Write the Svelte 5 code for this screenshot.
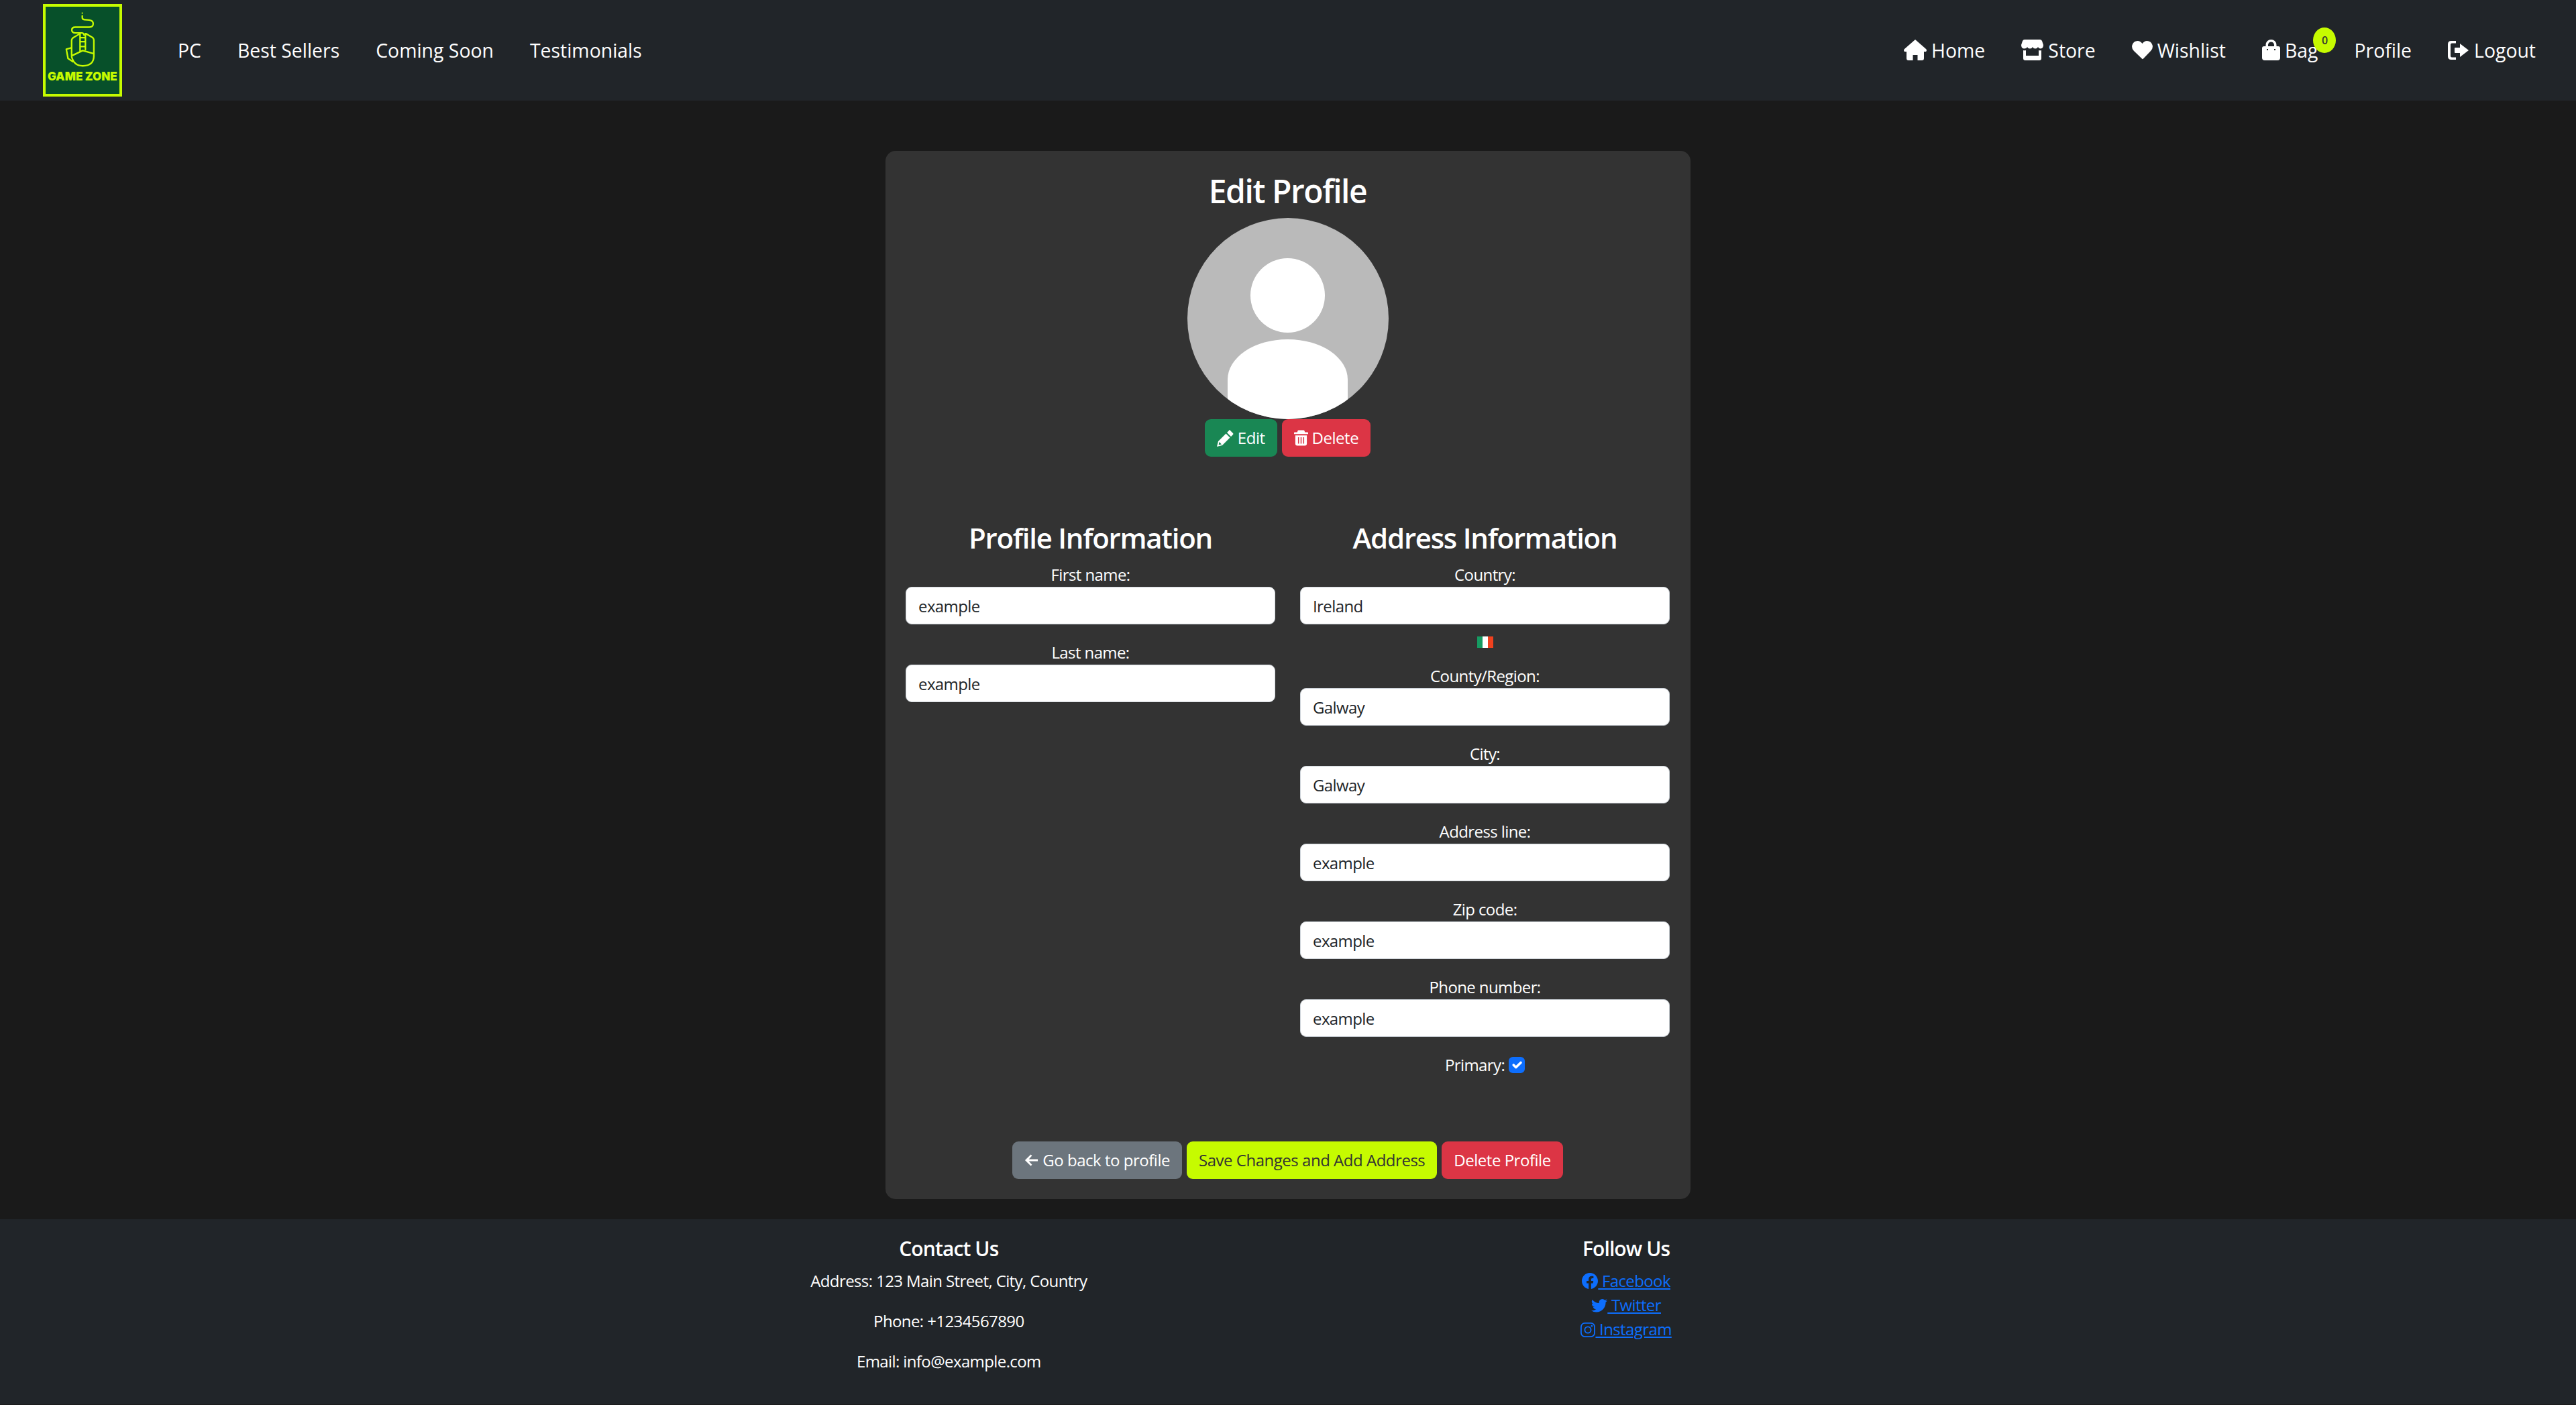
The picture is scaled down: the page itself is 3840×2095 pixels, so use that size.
<script>
  const leftLinks = ['PC', 'Best Sellers', 'Coming Soon', 'Testimonials'];
  const profileFields = [
    { label: 'First name:', value: 'example' },
    { label: 'Last name:', value: 'example' }
  ];
  const addressFields = [
    { label: 'County/Region:', value: 'Galway' },
    { label: 'City:', value: 'Galway' },
    { label: 'Address line:', value: 'example' },
    { label: 'Zip code:', value: 'example' },
    { label: 'Phone number:', value: 'example' }
  ];
</script>

<nav class="navbar">
  <div class="nav-left">
    <div class="logo">
      <svg viewBox="84 29 330 392" width="110" height="130">
        <g fill="none" stroke="#c6fb00" stroke-width="7" stroke-linecap="round" stroke-linejoin="round">
          <path d="M248 70v8q0 8 9 9l22 2q18 2 18 17 0 15-18 15h-62q-16 0-16 13 0 13 16 13l28 0q10 0 11 10" />
          <path d="M238 150 208 168q-8 5-8 14v66" />
          <path d="M264 150 292 166q8 5 8 14v70q0 45-50 45-40 0-50-42" />
          <path d="M198 214 176 220 184 262 206 276" />
          <path d="M238 150v78M262 150v72M238 168h24M238 186h24M238 208h24" />
          <path d="M204 248 250 226 298 240" />
        </g>
        <circle cx="248" cy="58" r="3.500" fill="#c6fb00" />
        <text x="92" y="360" textLength="313" lengthAdjust="spacingAndGlyphs" class="logo-text">GAME ZONE</text>
      </svg>
    </div>
    <ul class="links first">
      {#each leftLinks as link}
        <li>{link}</li>
      {/each}
    </ul>
  </div>
  <ul class="links">
    <li>
      <svg class="ico" viewBox="0 0 34 31" width="34" height="31"><path fill="#fff" d="M17 0 33 14q2 2 0 4h-3v10q0 3-3 3h-6.500V23h-7v8H7q-3 0-3-3V18H1q-2-2 0-4z" /></svg>
      Home
    </li>
    <li>
      <svg class="ico" viewBox="0 0 33 31" width="33" height="31"><path fill="#fff" d="M5 0h23q2 0 3 2l2 6q0 5-4 5.500-3 0-4-2.500-1 2.500-4 2.500-3 0-4-2.500-1 2.500-4 2.500-3 0-4-2.500-1 2.500-5 2.500-4-.5-4-5.500l2-6q1-2 3-2zM3 16q2 .5 4 0v8h19v-8q2 .5 4 0v12q0 3-3 3H6q-3 0-3-3z" /></svg>
      Store
    </li>
    <li>
      <svg class="ico" viewBox="0 0 31 31" width="31" height="31"><path fill="#fff" d="M15.500 29 3 17Q-1 13 .5 8 2.500 2 8.500 2q4 0 7 4 3-4 7-4 6 0 8 6 1.500 5-2.500 9L17 28.500q-1.500 1-1.500.5z" /></svg>
      Wishlist
    </li>
    <li class="bag">
      <svg class="ico" viewBox="0 0 27 31" width="27" height="31"><path fill="#fff" fill-rule="evenodd" d="M5.500 10V8a8 8 0 0 1 16 0v2H24q3 0 3 3v14q0 4-4 4H4q-4 0-4-4V13q0-3 3-3zM9 10h9V8a4.500 4.500 0 0 0-9 0zM7 14v2h2v-2zM18 14v2h2v-2z" /></svg>
      Bag
      <span class="badge">0</span>
    </li>
    <li>Profile</li>
    <li>
      <svg class="ico" viewBox="0 0 32 30" width="32" height="30"><path fill="#fff" d="M12 1v3.500H6q-2 0-2 2v17q0 2 2 2h6V29H5q-5 0-5-5V6q0-5 5-5zM18 5 31 15 18 25v-6h-7q-1 0-1-1v-6q0-1 1-1h7z" /></svg>
      Logout
    </li>
  </ul>
</nav>

<main class="page">
  <section class="card">
    <h2>Edit Profile</h2>
    <div class="avatar">
      <span class="head"></span>
      <span class="body"></span>
    </div>
    <div class="avatar-actions">
      <button class="btn green">
        <svg viewBox="0 0 25 25" width="25" height="25"><path fill="#fff" fill-rule="evenodd" d="M19 0l5 5q1 1 0 2l-3 3-6-6 3-3q.5-1 1-1zM13.500 5.500l6 6L8 23 0 25l2-8zM3.500 18 2.600 22.400 7 21.400z" /></svg>
        Edit
      </button>
      <button class="btn red">
        <svg viewBox="0 0 22 24" width="21" height="24"><path fill="#fff" fill-rule="evenodd" d="M7 0h8q1 0 1.500 1.500L17 3h4q1 0 1 1v2H0V4q0-1 1-1h4l.5-1.500Q6 0 7 0zM2 8h18v13q0 3-3 3H5q-3 0-3-3zm4.200 3v10h1.600V11zm4 0v10h1.600V11zm4 0v10h1.600V11z" /></svg>
        Delete
      </button>
    </div>

    <div class="columns">
      <div class="col">
        <h3>Profile Information</h3>
        {#each profileFields as field}
          <div class="field">
            <label>{field.label}<input value={field.value} /></label>
          </div>
        {/each}
      </div>
      <div class="col">
        <h3>Address Information</h3>
        <label>Country:<input value="Ireland" /></label>
        <div class="flag"></div>
        {#each addressFields as field}
          <div class="field">
            <label>{field.label}<input value={field.value} /></label>
          </div>
        {/each}
        <div class="primary">
          Primary:
          <span class="check">
            <svg viewBox="0 0 20 20" width="24" height="24"><path fill="none" stroke="#fff" stroke-width="3" stroke-linecap="round" stroke-linejoin="round" d="M6 10l3 3 6-6" /></svg>
          </span>
        </div>
      </div>
    </div>

    <div class="form-actions">
      <button class="btn grey">
        <svg viewBox="0 0 22 24" width="21" height="24"><path fill="#fff" d="M10 3l2 2-5 5.500h14v3H7l5 5.500-2 2-9-9z" /></svg>
        Go back to profile
      </button>
      <button class="btn lime">Save Changes and Add Address</button>
      <button class="btn red">Delete Profile</button>
    </div>
  </section>
</main>

<footer class="footer">
  <div class="contact">
    <h5>Contact Us</h5>
    <p>Address: 123 Main Street, City, Country</p>
    <p>Phone: +1234567890</p>
    <p>Email: info@example.com</p>
  </div>
  <div class="social">
    <h5>Follow Us</h5>
    <ul>
      <li>
        <a href="#facebook">
          <svg viewBox="0 0 16 16" width="24" height="24"><path fill="#0d6efd" d="M16 8.049c0-4.446-3.582-8.05-8-8.05C3.58 0-.002 3.603-.002 8.05c0 4.017 2.926 7.347 6.75 7.951v-5.625h-2.03V8.05H6.75V6.275c0-2.017 1.195-3.131 3.022-3.131.876 0 1.791.157 1.791.157v1.98h-1.009c-.993 0-1.303.621-1.303 1.258v1.51h2.218l-.354 2.326H9.25V16c3.824-.604 6.75-3.934 6.750-7.951z" /></svg>
          Facebook
        </a>
      </li>
      <li>
        <a href="#twitter">
          <svg viewBox="0 0 16 16" width="24" height="24"><path fill="#0d6efd" d="M5.026 15c6.038 0 9.341-5.003 9.341-9.334 0-.14 0-.282-.006-.422A6.685 6.685 0 0 0 16 3.542a6.658 6.658 0 0 1-1.889.518 3.301 3.301 0 0 0 1.447-1.817 6.533 6.533 0 0 1-2.087.793A3.286 3.286 0 0 0 7.875 6.03a9.325 9.325 0 0 1-6.767-3.429 3.289 3.289 0 0 0 1.018 4.382A3.323 3.323 0 0 1 .64 6.575v.045a3.288 3.288 0 0 0 2.632 3.218 3.203 3.203 0 0 1-.865.115 3.23 3.23 0 0 1-.614-.057 3.283 3.283 0 0 0 3.067 2.277A6.588 6.588 0 0 1 .78 13.58a6.32 6.32 0 0 1-.78-.045A9.344 9.344 0 0 0 5.026 15z" /></svg>
          Twitter
        </a>
      </li>
      <li>
        <a href="#instagram">
          <svg viewBox="0 0 24 24" width="22" height="22"><g fill="none" stroke="#0d6efd" stroke-width="2"><rect x="1" y="1" width="22" height="22" rx="6" /><circle cx="12" cy="12" r="5" /></g><circle cx="18.400" cy="5.600" r="1.400" fill="#0d6efd" /></svg>
          Instagram
        </a>
      </li>
    </ul>
  </div>
</footer>

<style>
  :global(body) {
    background: #1a1a1a;
    color: #fff;
    font-family: 'Open Sans', 'Noto Sans', sans-serif;
    font-size: 24px;
    letter-spacing: -0.025em;
    line-height: 1.5;
  }

  .navbar {
    height: 150px;
    background: #212529;
    display: flex;
    align-items: center;
    justify-content: space-between;
    padding: 0 60px 0 64px;
    box-sizing: border-box;
  }

  .nav-left {
    display: flex;
    align-items: center;
    gap: 83px;
  }

  .logo {
    width: 118px;
    height: 138px;
    box-sizing: border-box;
    background: #07502a;
    border: 4px solid #c6fb00;
  }

  .logo svg {
    display: block;
  }

  .logo-text {
    fill: #c6fb00;
    font-family: 'Inter', sans-serif;
    font-weight: 900;
    font-size: 52px;
    letter-spacing: 0;
  }

  .links {
    list-style: none;
    margin: 0;
    padding: 0;
    display: flex;
    align-items: center;
    gap: 54px;
    font-size: 28.4px;
    letter-spacing: 0;
  }

  .links li {
    display: flex;
    align-items: center;
    gap: 7px;
    position: relative;
  }

  .badge {
    position: absolute;
    right: -27px;
    top: -13px;
    width: 34px;
    height: 38px;
    border-radius: 50%;
    background: #c6fb00;
    color: #333;
    font-size: 16px;
    font-weight: 600;
    display: flex;
    align-items: center;
    justify-content: center;
  }

  .page {
    padding: 75px 0 30px;
  }

  .card {
    width: 1200px;
    margin: 0 auto;
    box-sizing: border-box;
    background: #333;
    border-radius: 15px;
    padding: 31px 31px 30px 30px;
    display: flex;
    flex-direction: column;
    align-items: center;
  }

  h2 {
    margin: 0 0 12px;
    font-size: 48px;
    line-height: 57px;
    font-weight: 600;
    letter-spacing: -0.03em;
  }

  h3 {
    margin: 0 0 12px;
    font-size: 42px;
    line-height: 51px;
    font-weight: 600;
    letter-spacing: -0.03em;
    text-align: center;
  }

  h5 {
    margin: 0 0 12px;
    font-size: 30px;
    line-height: 36px;
    font-weight: 600;
    letter-spacing: -0.03em;
  }

  .avatar {
    width: 300px;
    height: 300px;
    border-radius: 50%;
    background: #bababa;
    overflow: hidden;
    position: relative;
  }

  .head {
    position: absolute;
    left: 94px;
    top: 60px;
    width: 111px;
    height: 111px;
    border-radius: 50%;
    background: #fff;
  }

  .body {
    position: absolute;
    left: 60px;
    top: 181px;
    width: 179px;
    height: 140px;
    border-radius: 89px 89px 0 0 / 60px 60px 0 0;
    background: #fff;
  }

  .avatar-actions,
  .form-actions {
    display: flex;
    gap: 7px;
  }

  .btn {
    height: 56px;
    padding: 0 18px;
    border: 0;
    border-radius: 9px;
    color: #fff;
    font: inherit;
    letter-spacing: -0.02em;
    display: flex;
    align-items: center;
    gap: 6px;
  }

  .green {
    background: #198754;
  }

  .red {
    background: #dc3545;
  }

  .grey {
    background: #6c757d;
  }

  .lime {
    background: #c6fb00;
    color: #333;
  }

  .columns {
    width: 100%;
    margin-top: 95px;
    display: grid;
    grid-template-columns: 551px 551px;
    gap: 37px;
  }

  label {
    display: block;
    text-align: center;
  }

  input {
    display: block;
    width: 100%;
    height: 56px;
    box-sizing: border-box;
    padding: 0 18px;
    border: 1px solid #ced4da;
    border-radius: 9px;
    background: #fff;
    color: #212529;
    font: inherit;
    letter-spacing: inherit;
  }

  .field {
    margin-top: 24px;
  }

  .col > h3 + .field {
    margin-top: 0;
  }

  .flag {
    width: 24px;
    height: 17px;
    margin: 18px auto 1px;
    background: linear-gradient(to right, #169b62 33%, #fff 33% 66%, #f0411e 66%);
  }

  .primary {
    margin-top: 24px;
    display: flex;
    align-items: center;
    justify-content: center;
    gap: 6px;
    height: 36px;
  }

  .check {
    width: 24px;
    height: 24px;
    border-radius: 6px;
    background: #0d6efd;
  }

  .check svg {
    display: block;
  }

  .form-actions {
    margin-top: 96px;
  }

  .footer {
    background: #212529;
    padding: 26px 140px 22px 0;
    display: flex;
    justify-content: center;
    gap: 736px;
    text-align: center;
  }

  .footer p {
    margin: 0 0 24px;
  }

  .footer ul {
    list-style: none;
    margin: 0;
    padding: 0;
  }

  .footer a {
    color: #0d6efd;
    text-decoration: underline;
  }

  .footer a svg {
    vertical-align: -3px;
  }
</style>
